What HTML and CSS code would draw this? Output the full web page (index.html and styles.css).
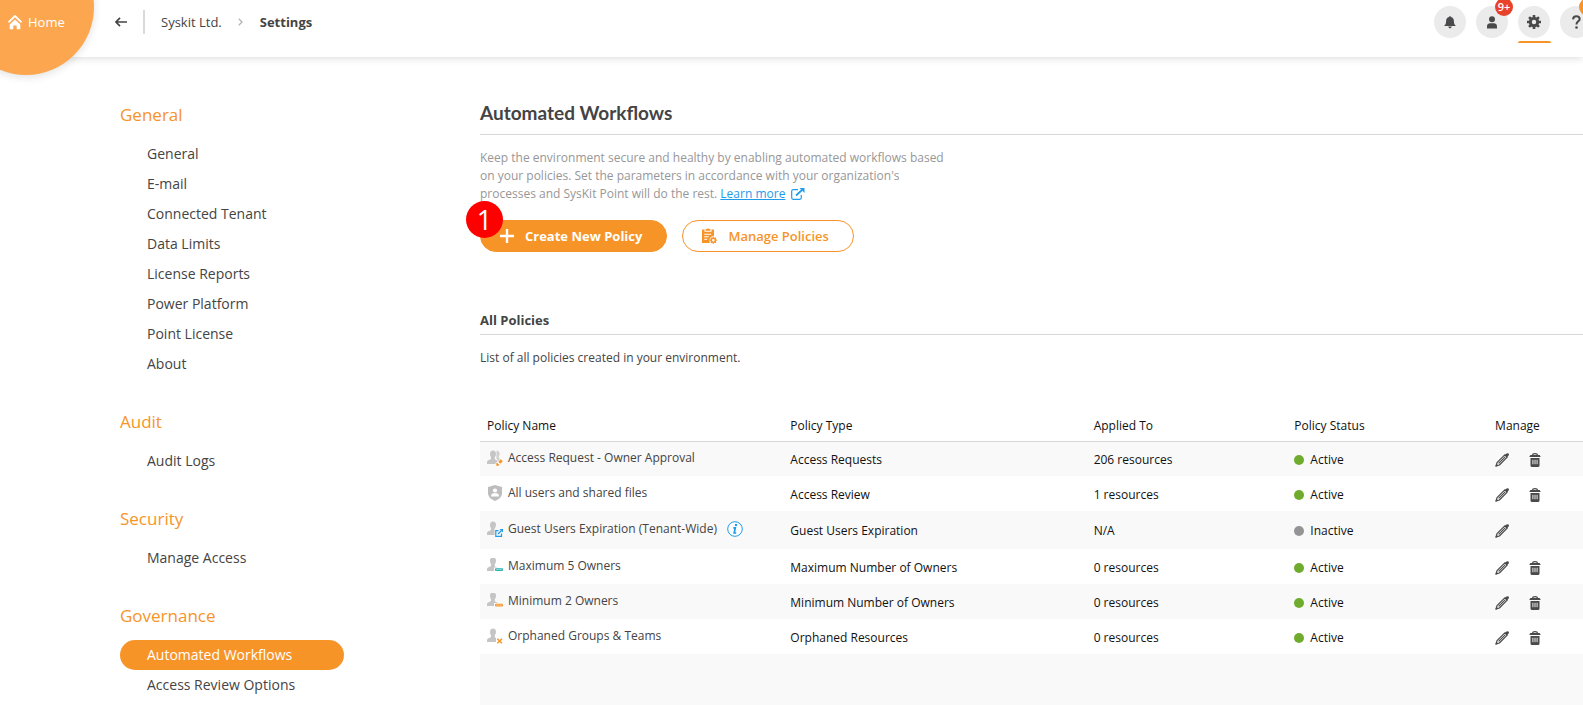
FILE: index.html
```html
<!DOCTYPE html>
<html lang="en">
<head>
<meta charset="utf-8">
<title>Settings - Automated Workflows</title>
<link rel="stylesheet" href="styles.css">
</head>
<body>
<svg class="sprite" aria-hidden="true">
  <symbol id="pencil" viewBox="0 0 14 14">
    <path d="M1.2 12.8 2 9.6 9.8 1.8 12.2 4.2 4.4 12z" fill="none" stroke="#4a4a4c" stroke-width="1.2" stroke-linejoin="round"/>
    <path d="M.2 13.8 1.2 10.4 3.6 12.8zM9.6 2.2 11 .8Q12.4-.4 13.5.6T13.2 3L11.8 4.4z" fill="#4a4a4c"/>
    <path d="M3.6 10.4 10.2 3.8" stroke="#4a4a4c" stroke-width="1.1"/>
  </symbol>
  <symbol id="trash" viewBox="0 0 12 14">
    <path d="M3.5 2.2Q3.6.6 6 .6t2.5 1.6" fill="none" stroke="#4a4a4c" stroke-width="1.1"/>
    <path d="M1.3 2h9.4l1 1.9H.3zM1.5 5h9v7.5Q10.500 14 9 14H3Q1.500 14 1.500 12.500z" fill="#4a4a4c"/>
    <path d="M3.900 6.800v4.400M6 6.800v4.400M8.100 6.800v4.400" stroke="#fff" stroke-width=".9"/>
  </symbol>
  <symbol id="user" viewBox="0 0 16 16">
    <path d="M6 .5c2 0 3 1.300 3 3.200 0 1.500-.5 2.600-1.200 3.400v1.500c0 1 1 1.400 2.200 1.900.9.400 1 1 1 3.500H0c0-2.600.2-3.200 1.300-3.700 1.500-.6 2.700-.8 2.700-1.800V7.100C3.400 6.300 3 5.200 3 3.700 3 1.800 4 .5 6 .5z" fill="#c5c5c5"/>
  </symbol>
</svg>

<header class="topbar">
  <a class="home" href="#">
    <svg width="14" height="15" viewBox="0 0 14 15"><path d="M.5 7.300 7 1l6.500 6.300" fill="none" stroke="#fff" stroke-width="1.800"/><path d="M7 4.600 12.300 9.600V14.300H8.700V10.500H5.300v3.800H1.700V9.600z" fill="#fff"/></svg>
    <span>Home</span>
  </a>
  <nav class="crumbs" aria-label="Breadcrumb">
    <button class="back" type="button" aria-label="Back">
      <svg width="12" height="10" viewBox="0 0 12 10"><path d="M5 .8.9 5 5 9.200M1.200 5H12" fill="none" stroke="#444" stroke-width="1.700"/></svg>
    </button>
    <a class="crumb" href="#">Syskit Ltd.</a>
    <svg class="chevron" width="5" height="8" viewBox="0 0 5 8"><path d="M.8.8 4 4 .8 7.200" fill="none" stroke="#b4b4b4" stroke-width="1.300"/></svg>
    <strong>Settings</strong>
  </nav>
  <div class="tools">
    <button class="tool" type="button" aria-label="Notifications">
      <svg width="12" height="13" viewBox="0 0 12 13"><path d="M6 .2c.7 0 1 .4 1 .9C9 1.600 9.800 3 9.900 5c.1 2.500.5 3.500 2.100 5H0c1.600-1.500 2-2.500 2.100-5C2.200 3 3 1.600 5 1.100c0-.5.300-.9 1-.9zM4.200 10.600h3.600Q7.500 12.400 6 12.400T4.200 10.600z" fill="#4a4a4c"/></svg>
    </button>
    <button class="tool" type="button" aria-label="Account">
      <svg width="10" height="13" viewBox="0 0 10 13"><circle cx="5" cy="3.200" r="3" fill="#4a4a4c"/><path d="M0 12.500V10.500Q.2 7.300 3.200 7.300h3.600Q9.800 7.300 10 10.500v2z" fill="#4a4a4c"/></svg>
      <span class="count">9+</span>
    </button>
    <button class="tool current" type="button" aria-label="Settings">
      <svg width="14" height="14" viewBox="0 0 14 14"><circle cx="7" cy="7" r="3.700" fill="none" stroke="#4a4a4c" stroke-width="3"/><path d="M7 0v2.500M7 11.500V14M0 7h2.500M11.500 7H14M2.050 2.050l1.800 1.800M10.150 10.150l1.800 1.800M2.050 11.950l1.800-1.800M10.150 3.850l1.800-1.800" stroke="#4a4a4c" stroke-width="2.600"/></svg>
    </button>
    <button class="tool" type="button" aria-label="Help">
      <svg width="9" height="14" viewBox="0 0 9 14"><path d="M1.100 4.400Q1.200 1.200 4.400 1.200T7.700 4Q7.700 5.400 6.100 6.400T4.500 9.600" fill="none" stroke="#4a4a4c" stroke-width="2.100"/><circle cx="4.500" cy="12.500" r="1.300" fill="#4a4a4c"/></svg>
      <span class="count note"></span>
    </button>
  </div>
</header>

<div class="page">
  <nav class="side" aria-label="Settings">
    <section>
      <h2>General</h2>
      <ul>
        <li><a href="#">General</a></li>
        <li><a href="#">E-mail</a></li>
        <li><a href="#">Connected Tenant</a></li>
        <li><a href="#">Data Limits</a></li>
        <li><a href="#">License Reports</a></li>
        <li><a href="#">Power Platform</a></li>
        <li><a href="#">Point License</a></li>
        <li><a href="#">About</a></li>
      </ul>
    </section>
    <section>
      <h2>Audit</h2>
      <ul><li><a href="#">Audit Logs</a></li></ul>
    </section>
    <section>
      <h2>Security</h2>
      <ul><li><a href="#">Manage Access</a></li></ul>
    </section>
    <section>
      <h2>Governance</h2>
      <ul>
        <li><a class="active" href="#" aria-current="page">Automated Workflows</a></li>
        <li><a href="#">Access Review Options</a></li>
      </ul>
    </section>
  </nav>

  <main class="main">
    <h1>Automated Workflows</h1>
    <p class="intro">Keep the environment secure and healthy by enabling automated workflows based<br>on your policies. Set the parameters in accordance with your organization's<br>processes and SysKit Point will do the rest. <a href="#">Learn more</a>
      <svg class="ext" width="14" height="12" viewBox="0 0 14 12"><path d="M7 1.700H2.200Q.7 1.700.7 3.200v6.600q0 1.500 1.500 1.500h6.600q1.500 0 1.500-1.500V7" fill="none" stroke="#1e9be9" stroke-width="1.200"/><path d="M5 7.500 11 2" stroke="#1e9be9" stroke-width="1.700"/><path d="M8.500 0H13.500V5z" fill="#1e9be9"/></svg></p>
    <div class="actions">
      <button class="btn primary" type="button">
        <svg width="14" height="14" viewBox="0 0 14 14"><path d="M7 0v14M0 7h14" stroke="#fff" stroke-width="2.400"/></svg>
        Create New Policy
      </button>
      <button class="btn outline" type="button">
        <svg width="15" height="16" viewBox="0 0 15 16"><path d="M0 1.500h2.500v2.200h7V1.500H12v6.200Q8 8 7.300 12.200L7.800 15H0z" fill="#f79428"/><path d="M3.600.9h1.600Q6-.5 6.800.9h1.600V2.700H3.600z" fill="#f79428"/><path d="M2.200 6.300h7M2.200 8.800h4.500M2.200 11.300h3" stroke="#fff" stroke-width="1.100"/><circle cx="11.300" cy="12.200" r="2" fill="none" stroke="#f79428" stroke-width="1.500"/><path d="M11.300 8.600v1.500M11.300 14.300v1.500M7.700 12.200h1.500M13.400 12.200h1.500M8.800 9.700l1 1M12.800 13.700l1 1M8.800 14.700l1-1M12.800 10.700l1-1" stroke="#f79428" stroke-width="1.300"/></svg>
        Manage Policies
      </button>
      <span class="step">1</span>
    </div>

    <h2 class="sub">All Policies</h2>
    <p class="lead">List of all policies created in your environment.</p>

    <div class="grid">
    <table>
      <colgroup><col class="c-name"><col class="c-name"><col class="c-mid"><col class="c-mid"><col></colgroup>
      <thead><tr><th>Policy Name</th><th>Policy Type</th><th>Applied To</th><th>Policy Status</th><th>Manage</th></tr></thead>
      <tbody>
        <tr>
          <td><span class="name"><svg width="16" height="16" viewBox="0 0 16 16"><path d="M9.500.8c1.800-.3 3.200.7 3.200 2.900 0 1.300-.5 2-.9 2.600v1.500l2 1.500-2.500 2.400-2-3.400z" fill="#d0d0d0"/><use href="#user"/><path d="M7.500 14.500 14 8l2.500 2.500V16H8z" fill="#f9f9f9"/><path d="M9.300 15.800v-2.300l.8-.8 2.300 2.300-.8.800zM11.300 11.800l2.500-2.500 2 2-2.500 2.500z" fill="#f79428"/></svg>Access Request - Owner Approval</span></td>
          <td>Access Requests</td><td>206 resources</td><td><span class="status on">Active</span></td>
          <td><span class="tasks"><button type="button" aria-label="Edit"><svg width="14" height="14"><use href="#pencil"/></svg></button><button type="button" aria-label="Delete"><svg width="12" height="14"><use href="#trash"/></svg></button></span></td>
        </tr>
        <tr>
          <td><span class="name"><svg width="16" height="16" viewBox="0 0 16 16"><path d="M8 0 15 2v6.500Q14.500 13.500 8 16 1.500 13.500 1 8.500V2z" fill="#bdbdbd"/><circle cx="8" cy="5.500" r="2.100" fill="#fff"/><path d="M4 11.500Q4 8.400 6.500 8.200h3Q12 8.400 12 11.500z" fill="#fff"/></svg>All users and shared files</span></td>
          <td>Access Review</td><td>1 resources</td><td><span class="status on">Active</span></td>
          <td><span class="tasks"><button type="button" aria-label="Edit"><svg width="14" height="14"><use href="#pencil"/></svg></button><button type="button" aria-label="Delete"><svg width="12" height="14"><use href="#trash"/></svg></button></span></td>
        </tr>
        <tr class="tall">
          <td><span class="name"><svg width="16" height="16" viewBox="0 0 16 16"><use href="#user"/><path d="M7.500 8H16v8H7.500z" fill="#f9f9f9"/><path d="M11.500 9.700H8.800v5.700h5.700v-3M11 13l4-4" fill="none" stroke="#1e9be9" stroke-width="1.200"/><path d="M12.500 8H16v3.500z" fill="#1e9be9"/></svg>Guest Users Expiration (Tenant-Wide)<button class="info" type="button" aria-label="More information"><svg width="16" height="16" viewBox="0 0 16 16"><circle cx="8" cy="8" r="7.300" fill="#fff" stroke="#1e9be9"/><circle cx="9" cy="4" r="1.200" fill="#1e9be9"/><path d="M6.300 6.800h2L7.200 12h2" fill="none" stroke="#1e9be9" stroke-width="1.700"/></svg></button></span></td>
          <td>Guest Users Expiration</td><td>N/A</td><td><span class="status">Inactive</span></td>
          <td><span class="tasks"><button type="button" aria-label="Edit"><svg width="14" height="14"><use href="#pencil"/></svg></button></span></td>
        </tr>
        <tr>
          <td><span class="name"><svg width="16" height="16" viewBox="0 0 16 16"><use href="#user" y="-1"/><path d="M7 9.500h9v4H7z" fill="#fff"/><rect x="8" y="10.200" width="8" height="2.800" rx="1" fill="#27b3ae"/><path d="M9.500 11.600h5" stroke="#fff" stroke-width=".9" stroke-dasharray="1"/></svg>Maximum 5 Owners</span></td>
          <td>Maximum Number of Owners</td><td>0 resources</td><td><span class="status on">Active</span></td>
          <td><span class="tasks"><button type="button" aria-label="Edit"><svg width="14" height="14"><use href="#pencil"/></svg></button><button type="button" aria-label="Delete"><svg width="12" height="14"><use href="#trash"/></svg></button></span></td>
        </tr>
        <tr>
          <td><span class="name"><svg width="16" height="16" viewBox="0 0 16 16"><use href="#user" y="-1"/><path d="M7 10h9v4H7z" fill="#f9f9f9"/><rect x="8" y="10.700" width="8" height="2.800" rx="1" fill="#f79428"/><path d="M9.500 12.100h5" stroke="#fff" stroke-width=".9" stroke-dasharray="1"/></svg>Minimum 2 Owners</span></td>
          <td>Minimum Number of Owners</td><td>0 resources</td><td><span class="status on">Active</span></td>
          <td><span class="tasks"><button type="button" aria-label="Edit"><svg width="14" height="14"><use href="#pencil"/></svg></button><button type="button" aria-label="Delete"><svg width="12" height="14"><use href="#trash"/></svg></button></span></td>
        </tr>
        <tr>
          <td><span class="name"><svg width="16" height="16" viewBox="0 0 16 16"><use href="#user"/><path d="M9 10h7v6H9z" fill="#fff"/><path d="M10.300 10.800 15 15.200M15 10.800 10.300 15.200" stroke="#f79428" stroke-width="1.500"/></svg>Orphaned Groups &amp; Teams</span></td>
          <td>Orphaned Resources</td><td>0 resources</td><td><span class="status on">Active</span></td>
          <td><span class="tasks"><button type="button" aria-label="Edit"><svg width="14" height="14"><use href="#pencil"/></svg></button><button type="button" aria-label="Delete"><svg width="12" height="14"><use href="#trash"/></svg></button></span></td>
        </tr>
      </tbody>
    </table>
    </div>
  </main>
</div>
</body>
</html>
```
FILE: styles.css
```css
* { box-sizing: border-box; }

body {
  margin: 0;
  min-height: 100vh;
  display: flex;
  flex-direction: column;
  overflow-x: hidden;
  background: #fff;
  color: #444;
  font: 13px/18px "Open Sans", "Noto Sans", sans-serif;
}

h1, h2, p, ul { margin: 0; padding: 0; }
a { color: inherit; text-decoration: none; }
button { font: inherit; color: inherit; border: 0; padding: 0; background: none; cursor: pointer; }
svg { display: block; flex: none; }
.sprite { position: absolute; width: 0; height: 0; }

/* Top bar */
.topbar {
  position: relative;
  display: flex;
  justify-content: space-between;
  height: 57px;
  padding-left: 115px;
  box-shadow: 0 2px 7px rgba(0, 0, 0, .12);
}
.home {
  position: absolute;
  left: -42px;
  top: -61px;
  width: 136px;
  height: 136px;
  padding: 74px 0 0 50px;
  display: flex;
  align-items: flex-start;
  gap: 6px;
  border-radius: 50%;
  background: #fca74f;
  color: #fff;
  line-height: 18px;
  box-shadow: 0 2px 8px rgba(0, 0, 0, .12);
}
.home svg { margin-top: 2px; }
.crumbs { display: flex; align-items: center; height: 44px; }
.back { height: 24px; padding-right: 16px; border-right: 2px solid #d9d9d9; }
.crumb { margin: 0 16px; }
.chevron { margin-right: 17px; }
.tools { display: flex; gap: 10px; margin-right: -9px; padding-top: 6px; }
.tool {
  position: relative;
  display: grid;
  place-items: center;
  width: 32px;
  height: 32px;
  border-radius: 50%;
  background: #ebebeb;
}
.current::after {
  content: "";
  position: absolute;
  left: 0;
  top: 35px;
  width: 33px;
  height: 2px;
  border-radius: 2px 2px 0 0;
  background: #f79428;
}
.count {
  position: absolute;
  left: 19px;
  top: -8px;
  width: 18px;
  height: 18px;
  border-radius: 50%;
  background: #e8432a;
  color: #fff;
  font-size: 11px;
  font-weight: 600;
  line-height: 18px;
}
.note { background: #f79428; }

/* Layout */
.page { flex: 1; display: grid; grid-template-columns: 224px 1fr; column-gap: 136px; padding-left: 120px; }

/* Settings navigation */
.side { display: flex; flex-direction: column; gap: 29px; padding-top: 44px; }
.side h2 { margin-bottom: 10px; color: #f79428; font-size: 17px; font-weight: 400; line-height: 28px; }
.side ul { list-style: none; }
.side a { display: block; padding-left: 27px; border-radius: 15px; font-size: 14px; line-height: 30px; }
.side .active { background: #f79428; color: #fff; }

/* Content */
.main { display: flex; flex-direction: column; padding-top: 43px; }
h1 {
  padding-bottom: 8px;
  border-bottom: 1px solid #d8d8d8;
  font: 700 19px/26px Lato, sans-serif;
}
.intro { padding-top: 14px; color: #979797; font-size: 12px; line-height: 18px; }
.intro a { color: #1e9be9; text-decoration: underline; }
.ext { display: inline-block; margin-left: 2px; vertical-align: -2px; }
.actions { position: relative; display: flex; gap: 15px; padding-top: 17px; }
.btn {
  display: flex;
  align-items: center;
  gap: 11px;
  height: 32px;
  border: 1px solid #f79428;
  border-radius: 16px;
  padding: 0 24px 0 19px;
  font-size: 13px;
  font-weight: 700;
}
.primary { background: #f79428; color: #fff; }
.outline { background: #fff; color: #f79428; font-weight: 600; }
.step {
  position: absolute;
  left: -14px;
  top: -2px;
  width: 37px;
  height: 37px;
  border-radius: 50%;
  background: #f00;
  color: #fff;
  font-size: 27px;
  line-height: 37px;
  text-align: center;
}
.sub { margin-top: 59px; padding-bottom: 5px; border-bottom: 1px solid #d8d8d8; font-size: 13px; font-weight: 700; line-height: 18px; }
.lead { padding: 14px 0 49px; font-size: 12px; line-height: 18px; }

/* Policies table */
.grid { flex: 1; background: #f9f9f9; }
table { width: 100%; table-layout: fixed; border-collapse: collapse; color: #111; background: #fff; font-size: 12px; }
.c-name { width: 27.5%; }
.c-mid { width: 18.2%; }
th { height: 25px; padding: 0 7px 5px; border-bottom: 1px solid #d8d8d8; font-weight: 400; text-align: left; white-space: nowrap; }
td { height: 35px; padding: 2px 7px 0; white-space: nowrap; }
.tall td { height: 38px; }
td:first-child { padding: 0 7px 2px; }
tbody tr:nth-child(odd) { background: #f9f9f9; }
.name { display: flex; align-items: center; gap: 5px; color: #444; }
.info { margin-left: 5px; }
.status { display: flex; align-items: center; gap: 6px; }
.status::before { content: ""; width: 10px; height: 10px; border-radius: 50%; background: #949494; }
.on::before { background: #6fac2e; }
.tasks { display: flex; align-items: center; gap: 20px; }
```
